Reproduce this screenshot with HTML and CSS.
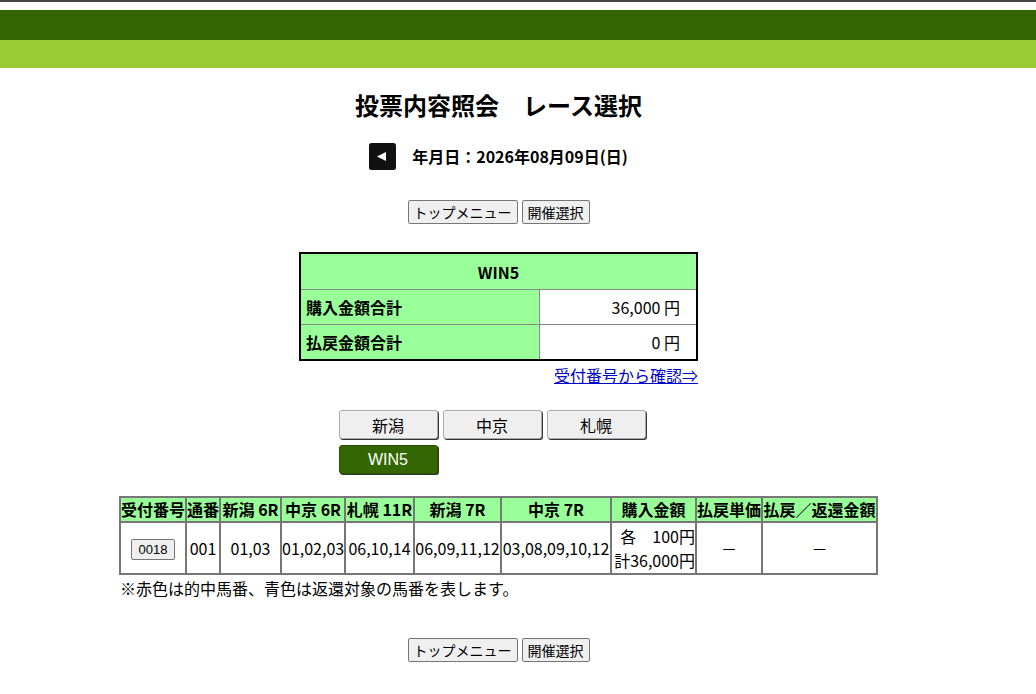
FILE: index.html
```html
<!DOCTYPE html>
<html lang="ja">
<head>
<meta charset="utf-8">
<title>投票内容照会 レース選択</title>
<link rel="stylesheet" href="styles.css">
</head>
<body>
<div class="topline"></div>
<div class="band-dark"></div>
<div class="band-light"></div>
<div class="wrap">
  <h1 class="title">投票内容照会　レース選択</h1>
  <div class="daterow">
    <a class="back" href="#"><svg width="27" height="27" viewBox="0 0 27 27"><rect width="27" height="27" rx="2.5" fill="#111"/><path d="M8 13.5 L17 9 L17 18 Z" fill="#fff"/></svg></a>
    <span class="date">年月日：2026年08月09日(日)</span>
  </div>
  <div class="btnrow">
    <button class="btn">トップメニュー</button>
    <button class="btn">開催選択</button>
  </div>
  <div class="summary-wrap">
    <table class="summary">
      <tr><th colspan="2" class="sum-head">WIN5</th></tr>
      <tr><th class="sum-label">購入金額合計</th><td class="sum-val">36,000 円</td></tr>
      <tr><th class="sum-label">払戻金額合計</th><td class="sum-val">0 円</td></tr>
    </table>
    <div class="linkrow"><a href="#" class="link">受付番号から確認⇒</a></div>
  </div>
  <div class="tabs">
    <div class="tabline">
      <button class="tab">新潟</button>
      <button class="tab">中京</button>
      <button class="tab">札幌</button>
    </div>
    <div class="tabline">
      <button class="tab tab-on">WIN5</button>
    </div>
  </div>
  <div class="main-wrap">
    <table class="main">
      <colgroup>
        <col class="c1"><col class="c2"><col class="c3"><col class="c4"><col class="c5"><col class="c6"><col class="c7"><col class="c8"><col class="c9"><col class="c10">
      </colgroup>
      <tr>
        <th>受付番号</th><th>通番</th><th>新潟 6R</th><th>中京 6R</th><th>札幌 11R</th><th>新潟 7R</th><th>中京 7R</th><th>購入金額</th><th>払戻単価</th><th>払戻／返還金額</th>
      </tr>
      <tr>
        <td><button class="small">0018</button></td>
        <td>001</td>
        <td>01,03</td>
        <td>01,02,03</td>
        <td>06,10,14</td>
        <td>06,09,11,12</td>
        <td>03,08,09,10,12</td>
        <td class="amt"><div>各　100円</div><div>計36,000円</div></td>
        <td>－</td>
        <td>－</td>
      </tr>
    </table>
    <p class="note">※赤色は的中馬番、青色は返還対象の馬番を表します。</p>
  </div>
  <div class="btnrow bottom">
    <button class="btn">トップメニュー</button>
    <button class="btn">開催選択</button>
  </div>
</div>
</body>
</html>
```
FILE: styles.css
```css
html, body {
  margin: 0;
  padding: 0;
  background: #fff;
  color: #000;
  font-family: "Noto Sans CJK JP", "Noto Sans", sans-serif;
  font-size: 16px;
}
.topline { height: 2px; background: #444; }
.band-dark { height: 30px; margin-top: 8px; background: #336600; }
.band-light { height: 28px; background: #99cc33; }
.wrap {
  width: 997px;
  display: flex;
  flex-direction: column;
  align-items: center;
}
.title {
  margin: 20px 0 0;
  font-size: 24px;
  line-height: 34px;
  font-weight: bold;
}
.daterow {
  margin-top: 21px;
  display: flex;
  align-items: center;
  gap: 16px;
  height: 27px;
}
.back { display: block; width: 27px; height: 27px; }
.back svg { display: block; }
.date { font-size: 16px; font-weight: bold; line-height: 27px; }
.btnrow {
  margin-top: 30px;
  display: flex;
  gap: 4px;
}
.btnrow.bottom { margin-top: 39px; }
.btn {
  font-family: "Noto Sans CJK JP", sans-serif;
  font-size: 14px;
  height: 24px;
  padding: 0 5px;
  background: #efefef;
  border: 1px solid #767676;
  border-radius: 2px;
  color: #000;
  line-height: 20px;
}
.summary-wrap {
  margin-top: 28px;
  width: 399px;
  display: flex;
  flex-direction: column;
}
.summary {
  width: 399px;
  border-collapse: collapse;
  border: 2px solid #000;
  font-size: 16px;
}
.summary th, .summary td {
  border: 1px solid #888;
  padding: 0 5px;
  height: 34px;
}
.sum-head { background: #99ff99; font-weight: bold; text-align: center; height: 35px !important; }
.sum-label { background: #99ff99; text-align: left; font-weight: bold; width: 228px; }
.sum-val { text-align: right; padding-right: 16px !important; background: #fff; }
.linkrow { display: flex; justify-content: flex-end; margin-top: 2px; }
.link { color: #0000cc; font-size: 16px; line-height: 24px; }
.tabs {
  margin-top: 23px;
  width: 320px;
  display: flex;
  flex-direction: column;
  gap: 6px;
}
.tabline { display: flex; gap: 5px; }
.tab {
  width: 99px;
  height: 29px;
  background: #efefef;
  border: 1px solid #aaa;
  border-radius: 3px;
  box-shadow: 1px 1px 0 #333;
  font-family: "Noto Sans CJK JP", sans-serif;
  font-size: 16px;
  color: #000;
  padding: 0;
}
.tab-on {
  background: #336600;
  color: #fff;
  border-color: #2a5200;
  font-family: "Liberation Sans", Arial, sans-serif;
  font-size: 16px;
}
.main-wrap { margin-top: 22px; display: flex; flex-direction: column; }
.main {
  table-layout: fixed;
  width: 759px;
  border-collapse: separate;
  border-spacing: 0;
  border: 1px solid #777;
  font-size: 16px;
}
.c1 { width: 66px; }
.c2 { width: 34px; }
.c3 { width: 61px; }
.c4 { width: 64px; }
.c5 { width: 69px; }
.c6 { width: 87px; }
.c7 { width: 110px; }
.c8 { width: 85px; }
.c9 { width: 66px; }
.c10 { width: 115px; }
.main th, .main td {
  border: 1px solid #777;
  padding: 0;
  white-space: nowrap;
  text-align: center;
  overflow: visible;
}
.main th {
  background: #99ff99;
  font-weight: bold;
  height: 23px;
  line-height: 23px;
}
.main td { height: 50px; line-height: 22px; }
.main td.amt { text-align: right; line-height: 24px; }
.small {
  font-family: "Liberation Sans", Arial, sans-serif;
  font-size: 13px;
  width: 44px;
  height: 21px;
  padding: 0;
  background: #efefef;
  border: 1px solid #767676;
  border-radius: 2px;
  color: #000;
}
.note { margin: 2px 0 0; font-size: 16px; line-height: 22px; padding-left: 1px; }
```
